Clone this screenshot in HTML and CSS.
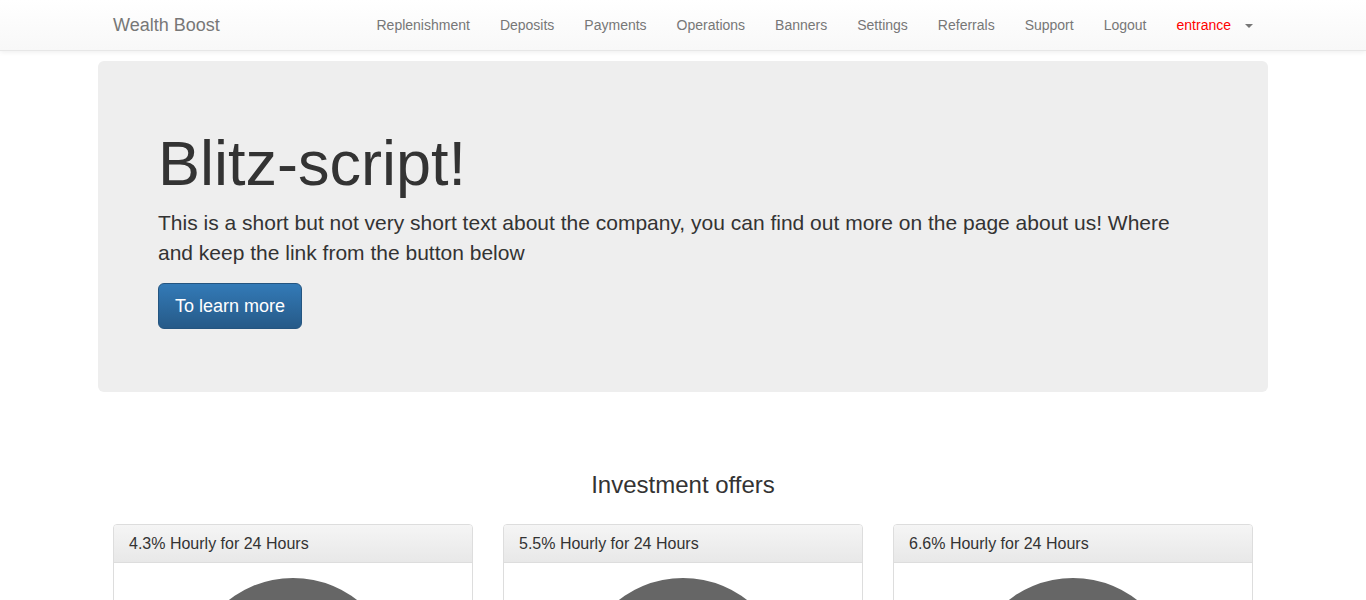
FILE: index.html
```html
<!DOCTYPE html>
<html>
<head>
<meta charset="utf-8">
<title>Wealth Boost</title>
<link rel="stylesheet" href="styles.css">
</head>
<body>
<nav class="navbar">
  <div class="nav-inner">
    <a class="brand" href="#">Wealth Boost</a>
    <ul class="nav-links">
      <li><a href="#">Replenishment</a></li>
      <li><a href="#">Deposits</a></li>
      <li><a href="#">Payments</a></li>
      <li><a href="#">Operations</a></li>
      <li><a href="#">Banners</a></li>
      <li><a href="#">Settings</a></li>
      <li><a href="#">Referrals</a></li>
      <li><a href="#">Support</a></li>
      <li><a href="#">Logout</a></li>
      <li><a href="#" class="entrance">entrance<span class="caret"></span></a></li>
    </ul>
  </div>
</nav>

<div class="jumbotron">
  <h1>Blitz-script!</h1>
  <p>This is a short but not very short text about the company, you can find out more on the page about us! Where and keep the link from the button below</p>
  <p><a class="btn-primary" href="#">To learn more</a></p>
</div>

<div class="offers">
  <h3 class="offers-title">Investment offers</h3>
  <div class="plans">
    <div class="panel">
      <div class="panel-heading">4.3% Hourly for 24 Hours</div>
      <div class="panel-body"><div class="pie"></div></div>
    </div>
    <div class="panel">
      <div class="panel-heading">5.5% Hourly for 24 Hours</div>
      <div class="panel-body"><div class="pie"></div></div>
    </div>
    <div class="panel">
      <div class="panel-heading">6.6% Hourly for 24 Hours</div>
      <div class="panel-body"><div class="pie"></div></div>
    </div>
  </div>
</div>
</body>
</html>
```

FILE: styles.css
```css
* { box-sizing: border-box; }
html, body { margin: 0; padding: 0; }
body {
  font-family: "Liberation Sans", Arial, Helvetica, sans-serif;
  font-size: 14px;
  line-height: 1.42857;
  color: #333;
  background: #fff;
}
a { text-decoration: none; }

.navbar {
  height: 51px;
  background: linear-gradient(to bottom, #ffffff 0%, #f8f8f8 100%);
  border-bottom: 1px solid #e7e7e7;
  box-shadow: inset 0 1px 0 rgba(255,255,255,.15), 0 1px 5px rgba(0,0,0,.075);
  margin-bottom: 10px;
}
.nav-inner {
  width: 1170px;
  margin: 0 auto;
  padding: 0 15px;
  display: flex;
  justify-content: space-between;
  align-items: flex-start;
}
.brand {
  margin-left: -15px;
  padding: 15px;
  font-size: 18px;
  line-height: 20px;
  height: 50px;
  color: #777;
}
.nav-links {
  list-style: none;
  margin: 0 -15px 0 0;
  padding: 0;
  display: flex;
}
.nav-links a {
  display: block;
  padding: 15px;
  line-height: 20px;
  color: #777;
  font-size: 14px;
}
.nav-links a.entrance { color: #ff0000; }
.caret {
  display: inline-block;
  width: 0;
  height: 0;
  margin-left: 14px;
  vertical-align: middle;
  border-top: 4px solid #777;
  border-right: 4px solid transparent;
  border-left: 4px solid transparent;
}

.jumbotron {
  width: 1170px;
  margin: 0 auto 30px;
  padding: 48px 60px;
  background: #eee;
  border-radius: 6px;
}
.jumbotron h1 {
  font-size: 63px;
  line-height: 1.1;
  font-weight: 500;
  margin: 20px 0 10px;
  color: #333;
}
.jumbotron p {
  font-size: 21px;
  font-weight: 200;
  margin: 0 0 15px;
}
.btn-primary {
  display: inline-block;
  padding: 11px 16px 9px;
  font-size: 18px;
  line-height: 1.3333;
  border-radius: 6px;
  color: #fff;
  background: linear-gradient(to bottom, #337ab7 0%, #265a88 100%);
  border: 1px solid #245580;
  vertical-align: top;
}

.offers {
  width: 1170px;
  margin: 0 auto;
  padding: 0 15px;
}
.offers-title {
  text-align: center;
  font-size: 24px;
  font-weight: 500;
  line-height: 1.1;
  margin: 80px 0 25px;
}
.plans {
  display: grid;
  grid-template-columns: repeat(3, 1fr);
  gap: 30px;
}
.panel {
  border: 1px solid #ddd;
  border-radius: 4px;
  background: #fff;
  overflow: hidden;
}
.panel-heading {
  padding: 10px 15px;
  font-size: 16px;
  line-height: 17px;
  height: 38px;
  color: #333;
  background: linear-gradient(to bottom, #f5f5f5 0%, #e8e8e8 100%);
  border-bottom: 1px solid #ddd;
}
.panel-body {
  padding: 15px;
}
.pie {
  width: 210px;
  height: 210px;
  border-radius: 50%;
  background: #666;
  margin: 0 auto;
}
```
